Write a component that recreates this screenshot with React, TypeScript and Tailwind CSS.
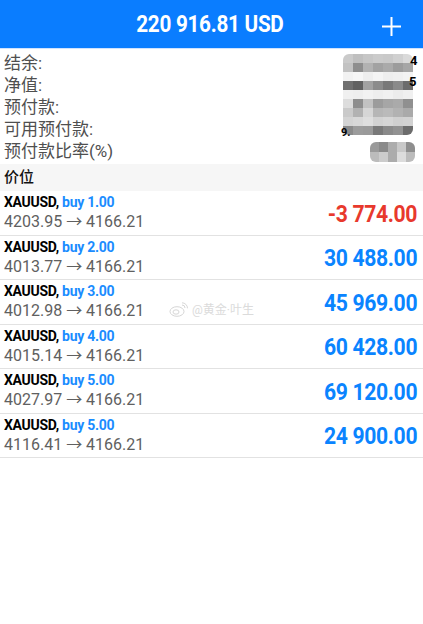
import React from "react";

const trades = [
  { lot: "1.00", open: "4203.95", amt: "-3 774.00", neg: true },
  { lot: "2.00", open: "4013.77", amt: "30 488.00", neg: false },
  { lot: "3.00", open: "4012.98", amt: "45 969.00", neg: false },
  { lot: "4.00", open: "4015.14", amt: "60 428.00", neg: false },
  { lot: "5.00", open: "4027.97", amt: "69 120.00", neg: false },
  { lot: "5.00", open: "4116.41", amt: "24 900.00", neg: false },
];

const labels = ["结余:", "净值:", "预付款:", "可用预付款:", "预付款比率(%)"];

const mosaic: string[][] = [
  ["#cacaca", "#bfbfbf", "#c6c6c6", "#cbcbcb", "#c9c9c9", "#d0d0d0", "#dadada"],
  ["#c2c2c2", "#8e8e8e", "#b2b2b2", "#a2a2a2", "#aaaaaa", "#9c9c9c", "#a6a6a6"],
  ["#f2f2f2", "#f6f6f6", "#eeeeee", "#f4f4f4", "#eeeeee", "#f0f0f0", "#f3f3f3"],
  ["#707070", "#616161", "#a2a2a2", "#8c8c8c", "#797979", "#8a8a8a", "#6c6c6c"],
  ["#f0f0f0", "#eeeeee", "#f2f2f2", "#eeeeee", "#f1f1f1", "#ececec", "#f0f0f0"],
  ["#dddddd", "#8e8e8e", "#c2c2c2", "#9c9c9c", "#a6a6a6", "#aaaaaa", "#909090"],
  ["#cacaca", "#b2b2b2", "#d6d6d6", "#b6b6b6", "#bababa", "#b2b2b2", "#aaaaaa"],
  ["#d4d4d4", "#d8d8d8", "#dedede", "#d2d2d2", "#d6d6d6", "#d0d0d0", "#d2d2d2"],
  ["#8a8a8a", "#9c9c9c", "#9a9a9a", "#797979", "#8a8a8a", "#929292", "#6c6c6c"],
];

const mosaic2: string[][] = [
  ["#9a9a9a", "#8a8a8a", "#acacac", "#c8c8c8", "#8e8e8e"],
  ["#bcbcbc", "#cccccc", "#acacac", "#dcdcdc", "#bcbcbc"],
];

export default function App() {
  return (
    <div
      className="w-[423px] h-[624px] bg-white relative overflow-hidden"
      style={{ fontFamily: 'Roboto, "Noto Sans CJK SC", sans-serif' }}
    >
      {/* Header */}
      <div className="h-[49px] bg-[#0a7dff] relative flex items-center justify-center border-b border-[#cfe3ff]">
        <span className="text-white font-bold text-[23px] tracking-[-0.3px] leading-none scale-x-[0.9] ml-[-3px]">
          220 916.81 USD
        </span>
        <svg
          className="absolute right-[22px] top-[17px]"
          width="19"
          height="19"
          viewBox="0 0 19 19"
        >
          <path d="M9.5 0V19M0 9.5H19" stroke="white" strokeWidth="2" />
        </svg>
      </div>

      {/* Account summary */}
      <div className="relative pt-[3px] pb-[2px]">
        {labels.map((l) => (
          <div key={l} className="h-[22px] px-[4px] flex items-center text-[17px] text-[#4f4f4f] leading-none">
            {l}
          </div>
        ))}
        {/* pixelated values */}
        <div className="absolute left-[343px] top-[5px] w-[70px] rounded-[6px] overflow-hidden flex flex-col">
          {mosaic.map((row, i) => (
            <div key={i} className="flex h-[9px]">
              {row.map((c, j) => (
                <div key={j} className="w-[10px] h-full" style={{ background: c }} />
              ))}
            </div>
          ))}
        </div>
        <span className="absolute left-[410px] top-[5px] text-[13px] font-bold text-black leading-none">4</span>
        <span className="absolute left-[409px] top-[26px] text-[13px] font-bold text-black leading-none">5</span>
        <span className="absolute left-[341px] top-[78px] text-[11px] font-bold text-black leading-none">9.</span>
        <div className="absolute left-[370px] top-[93px] w-[45px] rounded-[6px] overflow-hidden flex flex-col">
          {mosaic2.map((row, i) => (
            <div key={i} className="flex h-[10px]">
              {row.map((c, j) => (
                <div key={j} className="w-[9px] h-full" style={{ background: c }} />
              ))}
            </div>
          ))}
        </div>
      </div>

      {/* Section header */}
      <div className="h-[27px] bg-[#f6f6f6] px-[4px] flex items-center text-[15px] text-[#111111] font-medium">
        价位
      </div>

      {/* Trades */}
      <div>
        {trades.map((t, i) => (
          <div
            key={i}
            className="h-[44.5px] border-b border-[#e2e2e2] flex items-center justify-between pl-[4px] pr-[6px]"
          >
            <div className="flex flex-col">
              <div className="text-[14px] font-bold leading-[18px] tracking-[-0.3px]">
                <span className="text-black">XAUUSD,</span>{" "}
                <span className="text-[#1a8cff]">buy {t.lot}</span>
              </div>
              <div className="text-[16px] text-[#606060] leading-[20px] mt-[1px]">
                {t.open} → 4166.21
              </div>
            </div>
            <div
              className={`text-[23px] font-bold tracking-[-0.4px] mt-[4px] scale-x-[0.92] origin-right ${
                t.neg ? "text-[#e8392d]" : "text-[#0a84ff]"
              }`}
            >
              {t.amt}
            </div>
          </div>
        ))}
      </div>

      {/* Watermark */}
      <div className="absolute left-[169px] top-[302px] flex items-center gap-[4px] opacity-60">
        <svg width="19" height="15" viewBox="0 0 19 15" fill="none" stroke="#bcbcbc" strokeWidth="1">
          <ellipse cx="8" cy="9.5" rx="7" ry="4.8" />
          <ellipse cx="7" cy="10" rx="3" ry="2.2" />
          <path d="M13 3a3 3 0 0 1 3 3" />
          <path d="M13 0.8a5.5 5.5 0 0 1 5.5 5.5" />
        </svg>
        <span className="text-[12px] text-[#c4c4c4] leading-none">@黄金·叶生</span>
      </div>
    </div>
  );
}
